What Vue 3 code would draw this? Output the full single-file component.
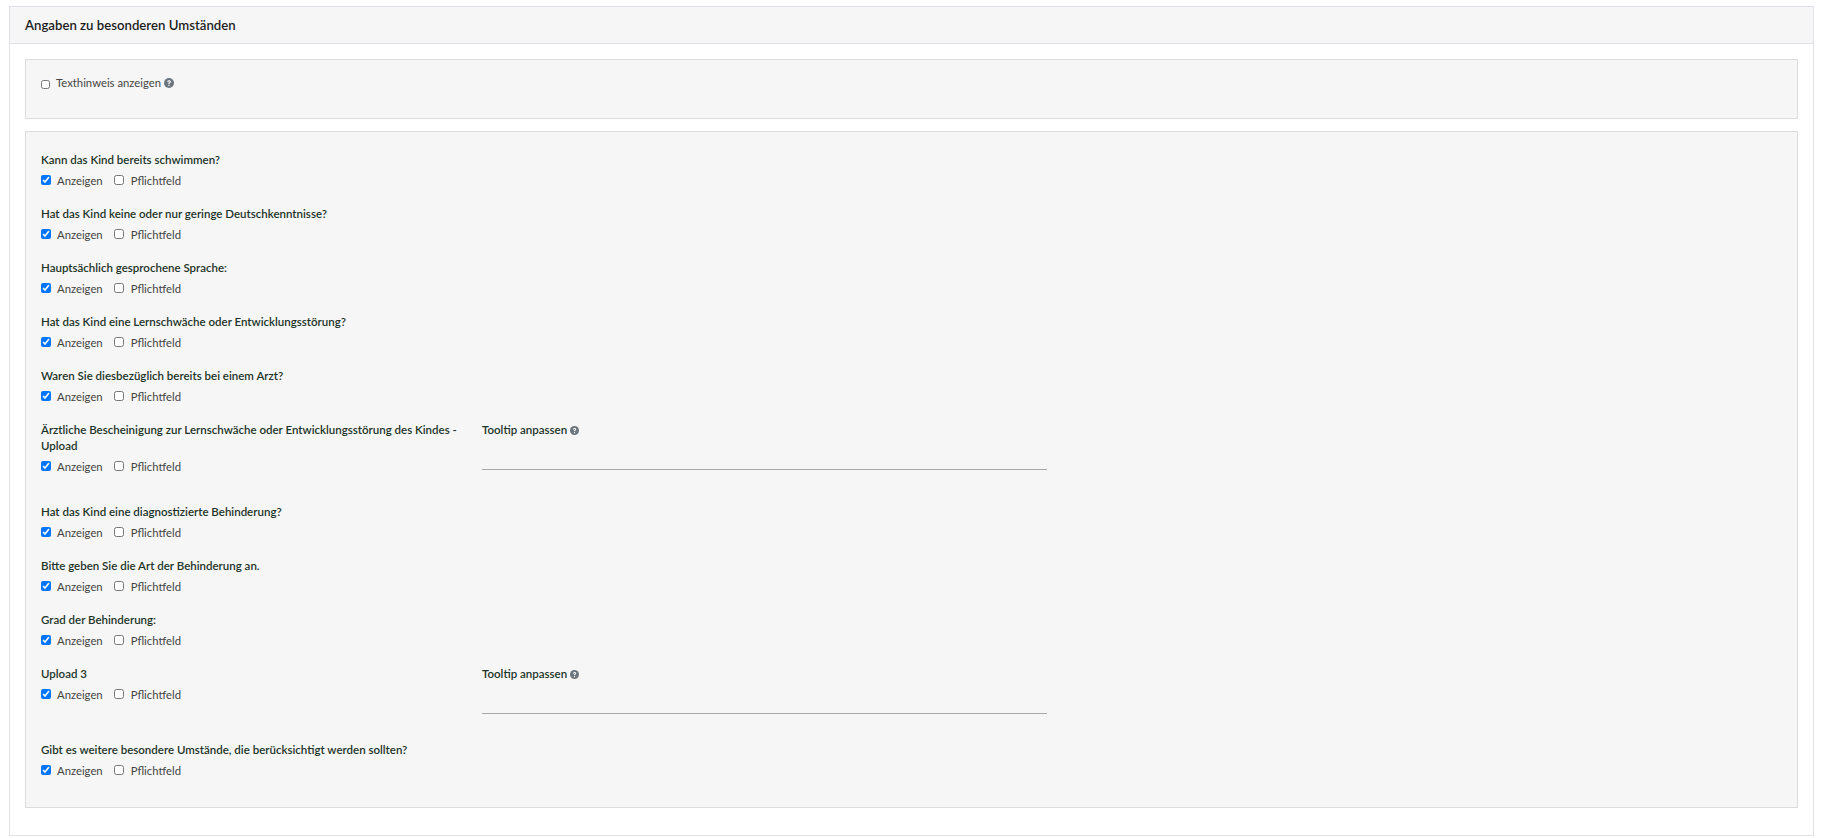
<script setup>
const fields = [
  { label: 'Kann das Kind bereits schwimmen?' },
  { label: 'Hat das Kind keine oder nur geringe Deutschkenntnisse?' },
  { label: 'Hauptsächlich gesprochene Sprache:' },
  { label: 'Hat das Kind eine Lernschwäche oder Entwicklungsstörung?' },
  { label: 'Waren Sie diesbezüglich bereits bei einem Arzt?' },
  { label: 'Ärztliche Bescheinigung zur Lernschwäche oder Entwicklungsstörung des Kindes - Upload', tooltip: true },
  { label: 'Hat das Kind eine diagnostizierte Behinderung?' },
  { label: 'Bitte geben Sie die Art der Behinderung an.' },
  { label: 'Grad der Behinderung:' },
  { label: 'Upload 3', tooltip: true },
  { label: 'Gibt es weitere besondere Umstände, die berücksichtigt werden sollten?' }
]
</script>

<template>
  <main class="page">
    <section class="panel">
      <h2 class="panel-head">Angaben zu besonderen Umständen</h2>
      <div class="panel-body">
        <div class="well well-hint">
          <label class="check">
            <input type="checkbox" />
            <span>
              Texthinweis anzeigen
              <svg class="help" viewBox="0 0 16 16">
                <circle cx="8" cy="8" r="8" fill="#6c757d" />
                <path d="M5 6.1c.1-1.7 1.3-2.7 3.1-2.7 1.7 0 3 1 3 2.5 0 1-.5 1.6-1.4 2.1-.7.4-.8.6-.8 1.1v.4H6.9v-.6c0-1 .4-1.5 1.2-2 .6-.4.8-.6.8-1 0-.5-.4-.7-.9-.7-.6 0-1 .3-1.1 1z" fill="#f6f6f6" />
                <rect x="6.9" y="10.7" width="2.1" height="2" rx=".3" fill="#f6f6f6" />
              </svg>
            </span>
          </label>
        </div>

        <div class="well well-fields">
          <div v-for="field in fields" :key="field.label" class="field" :class="{ 'has-tooltip': field.tooltip }">
            <div class="field-main">
              <div class="field-label">{{ field.label }}</div>
              <div class="field-checks">
                <label class="check">
                  <input type="checkbox" checked />
                  <span>Anzeigen</span>
                </label>
                <label class="check">
                  <input type="checkbox" />
                  <span>Pflichtfeld</span>
                </label>
              </div>
            </div>
            <div v-if="field.tooltip" class="field-tooltip">
              <div class="field-label">
                Tooltip anpassen
                <svg class="help help-small" viewBox="0 0 16 16">
                  <circle cx="8" cy="8" r="8" fill="#6c757d" />
                  <path d="M5 6.1c.1-1.7 1.3-2.7 3.1-2.7 1.7 0 3 1 3 2.5 0 1-.5 1.6-1.4 2.1-.7.4-.8.6-.8 1.1v.4H6.9v-.6c0-1 .4-1.5 1.2-2 .6-.4.8-.6.8-1 0-.5-.4-.7-.9-.7-.6 0-1 .3-1.1 1z" fill="#f6f6f6" />
                  <rect x="6.9" y="10.7" width="2.1" height="2" rx=".3" fill="#f6f6f6" />
                </svg>
              </div>
              <input class="tooltip-input" type="text" />
            </div>
          </div>
        </div>
      </div>
    </section>
  </main>
</template>

<style>
html, body {
  background: #fff;
}
</style>

<style scoped>
.page {
  padding: 6px 7px 3px 9px;
  font-family: Lato, "Open Sans", sans-serif;
  font-size: 11.3px;
  color: #444;
}
.panel {
  border: 1px solid #e0e0e6;
  background: #fff;
}
.panel-head {
  margin: 0;
  height: 37px;
  line-height: 36px;
  padding: 0 15px;
  box-sizing: border-box;
  font-size: 13.2px;
  font-weight: 600;
  color: #1c1c1c;
  background: #f6f6f6;
  border-bottom: 1px solid #e0e0e6;
}
.panel-body {
  padding: 15px 15px 27px;
}
.well {
  background: #f6f6f6;
  border: 1px solid #dcdcdc;
}
.well-hint {
  height: 60px;
  box-sizing: border-box;
  padding: 15px;
  margin-bottom: 12px;
}
.well-fields {
  padding: 20px 15px 11px;
}
.field {
  margin-bottom: 15px;
}
.field.has-tooltip {
  display: grid;
  grid-template-columns: 441px 565px;
}
.has-tooltip .field-main {
  padding-right: 15px;
  padding-bottom: 12px;
}
.has-tooltip .field-tooltip {
  padding-bottom: 13px;
}
.field-label {
  font-size: 11.5px;
  font-weight: 600;
  line-height: 16px;
  color: #1d3428;
}
.field-checks {
  display: flex;
  gap: 11px;
  margin-top: 3px;
  height: 20px;
  align-items: center;
}
.check {
  display: inline-flex;
  align-items: center;
  gap: 6px;
  line-height: 16px;
}
.check + .check {
  gap: 7px;
}
.check input {
  width: 10px;
  height: 10px;
  margin: 0 0 2px;
}
.well-hint .check input {
  width: 9px;
  height: 9px;
  margin: 2px 0 0;
}
.help {
  width: 10px;
  height: 10px;
  vertical-align: -1px;
}
.help-small {
  width: 9px;
  height: 9px;
}
.tooltip-input {
  display: block;
  box-sizing: border-box;
  width: 100%;
  height: 32px;
  padding: 0;
  border: 0;
  border-bottom: 1px solid #a8a8a8;
  background: transparent;
  outline: none;
}
</style>
